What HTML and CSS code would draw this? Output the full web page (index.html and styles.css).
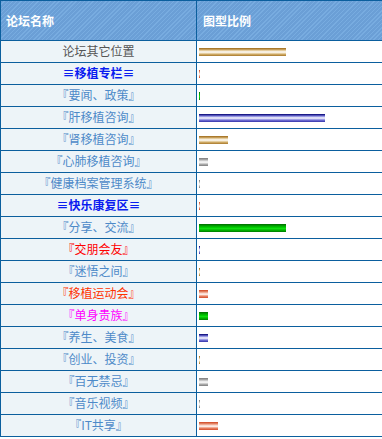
FILE: index.html
```html
<!DOCTYPE html>
<html lang="zh-CN">
<head>
<meta charset="utf-8">
<title>论坛统计</title>
<link rel="stylesheet" href="styles.css">
</head>
<body>
<div class="stats">
  <div class="th">论坛名称</div>
  <div class="th th-right">图型比例</div>

  <div class="name plain">论坛其它位置</div>
  <div class="cell"><span class="bar gold" style="width:87px"></span></div>

  <div class="name cat">≡移植专栏≡</div>
  <div class="cell"><span class="bar salmon" style="width:1px"></span></div>

  <div class="name link">『要闻、政策』</div>
  <div class="cell"><span class="bar green" style="width:1px"></span></div>

  <div class="name link">『肝移植咨询』</div>
  <div class="cell"><span class="bar blue" style="width:126px"></span></div>

  <div class="name link">『肾移植咨询』</div>
  <div class="cell"><span class="bar gold" style="width:29px"></span></div>

  <div class="name link">『心肺移植咨询』</div>
  <div class="cell"><span class="bar gray" style="width:9px"></span></div>

  <div class="name link">『健康档案管理系统』</div>
  <div class="cell"><span class="bar gray" style="width:1px"></span></div>

  <div class="name cat">≡快乐康复区≡</div>
  <div class="cell"><span class="bar salmon" style="width:1px"></span></div>

  <div class="name link">『分享、交流』</div>
  <div class="cell"><span class="bar green" style="width:87px"></span></div>

  <div class="name red">『交朋会友』</div>
  <div class="cell"><span class="bar blue" style="width:1px"></span></div>

  <div class="name link">『迷悟之间』</div>
  <div class="cell"><span class="bar gold" style="width:1px"></span></div>

  <div class="name orange">『移植运动会』</div>
  <div class="cell"><span class="bar salmon" style="width:9px"></span></div>

  <div class="name magenta">『单身贵族』</div>
  <div class="cell"><span class="bar green" style="width:9px"></span></div>

  <div class="name link">『养生、美食』</div>
  <div class="cell"><span class="bar blue" style="width:9px"></span></div>

  <div class="name link">『创业、投资』</div>
  <div class="cell"><span class="bar gold" style="width:1px"></span></div>

  <div class="name link">『百无禁忌』</div>
  <div class="cell"><span class="bar gray" style="width:9px"></span></div>

  <div class="name link">『音乐视频』</div>
  <div class="cell"><span class="bar gray" style="width:1px"></span></div>

  <div class="name link">『IT共享』</div>
  <div class="cell"><span class="bar salmon" style="width:19px"></span></div>
</div>
</body>
</html>
```

FILE: styles.css
```css
html, body {
  margin: 0;
  padding: 0;
  background: #ffffff;
  overflow: hidden;
}

body {
  font-family: "Noto Sans CJK SC", "Liberation Sans", sans-serif;
  font-size: 12px;
}

.stats {
  display: grid;
  grid-template-columns: 195px 1fr;
  grid-template-rows: 39px;
  grid-auto-rows: 21px;
  gap: 1px;
  padding: 1px 0 1px 1px;
  background: #0b5f9e;
}

.th {
  display: flex;
  align-items: center;
  padding-left: 5px;
  color: #ffffff;
  font-weight: bold;
  font-size: 12px;
  background-color: #6ea2d8;
  background-image: repeating-linear-gradient(135deg, #6b9fd6 0, #6b9fd6 2px, #78ace0 2px, #78ace0 3px);
}

.th-right {
  padding-left: 6px;
}

.name {
  display: flex;
  align-items: center;
  justify-content: center;
  background: #edf4f8;
  line-height: 1;
  padding-bottom: 1px;
}

.plain { color: #555555; }
.cat { color: #0a1cf0; font-weight: bold; }
.link { color: #4d8ac8; }
.red { color: #ff0000; }
.orange { color: #ff3300; }
.magenta { color: #ff00ff; }

.cell {
  display: flex;
  align-items: center;
  padding-left: 2px;
  background: #ffffff;
}

.bar {
  display: block;
  height: 8px;
}

.gold {
  background: linear-gradient(to bottom, #9f6d1d 0, #b88a3e 14%, #e6cfa3 32%, #ffffff 50%, #eedcb8 64%, #c9a25a 82%, #a8782a 100%);
}

.blue {
  background: linear-gradient(to bottom, #00006e 0, #3a3aa8 14%, #9c9ce6 32%, #ffffff 50%, #b4b4ee 64%, #6262cc 82%, #3434a8 100%);
}

.green {
  background: linear-gradient(to bottom, #006a00 0, #009a00 20%, #00d000 45%, #10e010 55%, #00b400 78%, #007800 100%);
}

.gray {
  background: linear-gradient(to bottom, #7a7a7a 0, #a0a0a0 18%, #e4e4e4 40%, #ffffff 52%, #d0d0d0 68%, #9a9a9a 85%, #808080 100%);
}

.salmon {
  background: linear-gradient(to bottom, #d04420 0, #e07a5a 18%, #f6c4b2 38%, #ffffff 52%, #f2b09a 68%, #e06a48 85%, #d45030 100%);
}
```
